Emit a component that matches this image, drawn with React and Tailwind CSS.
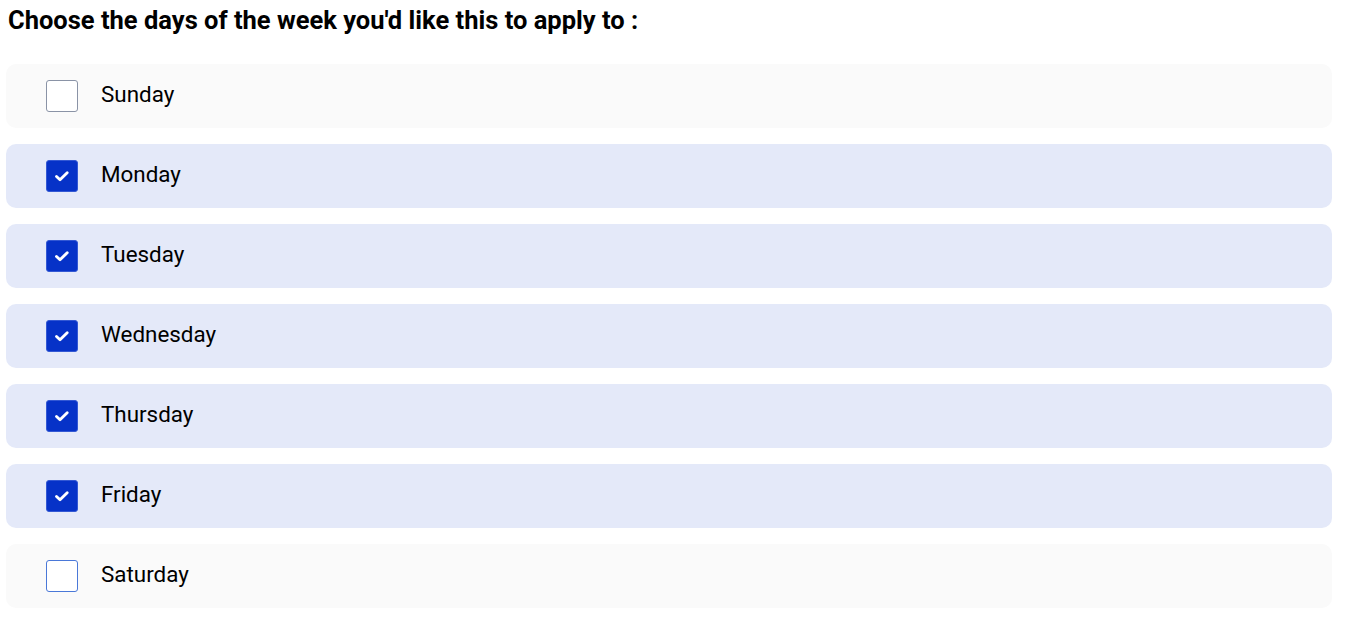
import { useState } from 'react';

const DAYS = ['Sunday', 'Monday', 'Tuesday', 'Wednesday', 'Thursday', 'Friday', 'Saturday'];

function Check({ checked, focused }) {
  if (checked) {
    return (
      <span className="flex h-8 w-8 items-center justify-center rounded-[3px] border border-[#3358d4] bg-[#0632c8]">
        <svg width="16" height="16" viewBox="0 0 16 16" fill="none" stroke="white" strokeWidth="2.9" strokeLinecap="round" strokeLinejoin="round">
          <path d="M2.5 8.5l3.5 3.2L13.2 4.8" />
        </svg>
      </span>
    );
  }
  return (
    <span
      className={
        focused
          ? 'block h-8 w-8 rounded-[3px] border-[1.5px] border-[#4a78d8] bg-white'
          : 'block h-8 w-8 rounded-[3px] border-[1.5px] border-[#8a93a6] bg-white'
      }
    />
  );
}

export default function App() {
  const [selected, setSelected] = useState(['Monday', 'Tuesday', 'Wednesday', 'Thursday', 'Friday']);

  function toggle(day) {
    setSelected(s => (s.includes(day) ? s.filter(d => d !== day) : [...s, day]));
  }

  return (
    <div className="min-h-screen bg-white font-['Roboto',sans-serif] text-black">
      <h2 className="pl-2 pt-[6px] text-[25.5px] font-bold leading-[29px]">
        Choose the days of the week you'd like this to apply to :
      </h2>

      <div className="mt-[29px] flex w-[1326px] flex-col gap-4 pl-[6px] box-content">
        {DAYS.map(day => {
          const on = selected.includes(day);
          return (
            <label
              key={day}
              onClick={() => toggle(day)}
              className={
                on
                  ? 'flex h-16 cursor-pointer items-center gap-[23px] rounded-[10px] bg-[#e4e9f9] pl-10'
                  : 'flex h-16 cursor-pointer items-center gap-[23px] rounded-[10px] bg-[#fafafa] pl-10'
              }
            >
              <Check checked={on} focused={day === 'Saturday'} />
              <span className="-mt-[4px] text-[22.4px] leading-none">{day}</span>
            </label>
          );
        })}
      </div>
    </div>
  );
}
